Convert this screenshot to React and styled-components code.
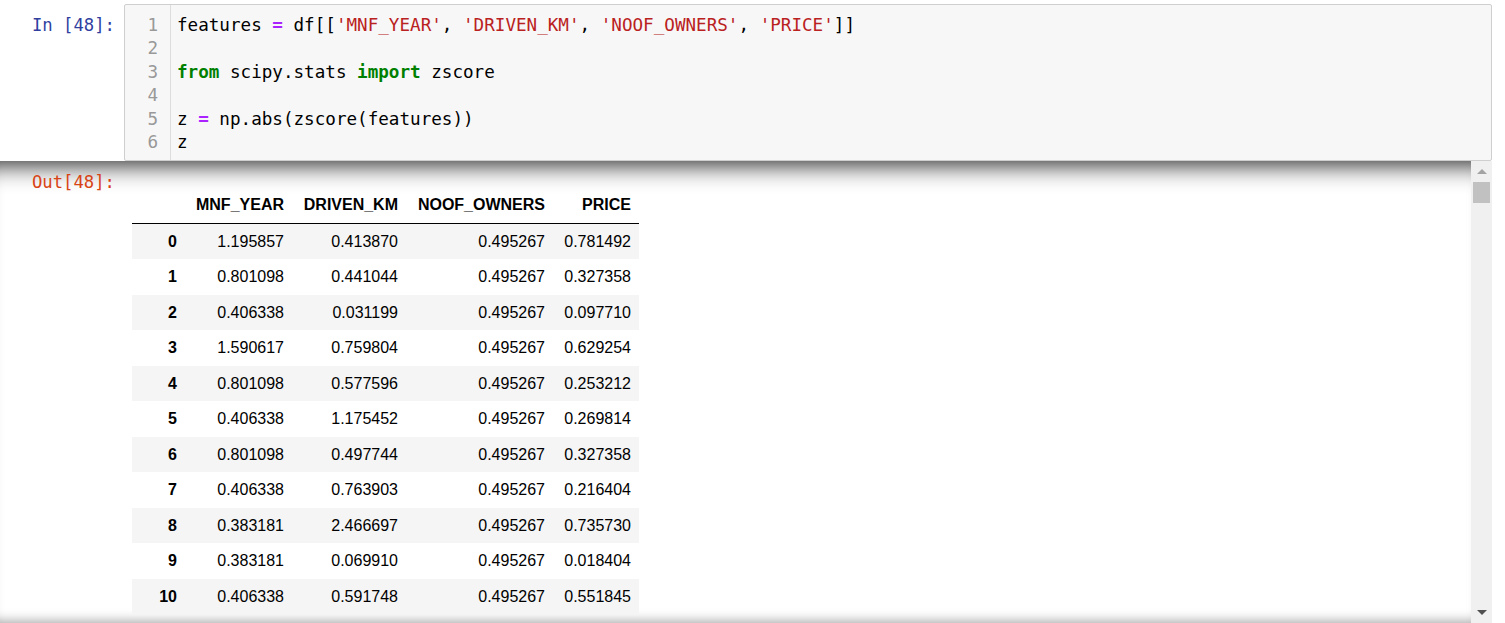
import styled, { createGlobalStyle } from 'styled-components';

const GlobalStyle = createGlobalStyle`
    body {
        margin: 0;
        background: #ffffff;
        overflow: hidden;
    }
`

const MONO = `"DejaVu Sans Mono", "Liberation Mono", monospace`

const Notebook = styled.div`
    padding: 4px 13px 0 0;
    width: 1505px;
    box-sizing: border-box;
`

const InputRow = styled.div`
    display: flex;
    align-items: flex-start;
`

const Prompt = styled.div`
    width: 124px;
    flex: none;
    box-sizing: border-box;
    padding-right: 9px;
    padding-top: ${p => p.$top}px;
    text-align: right;
    font-family: ${MONO};
    font-size: 17.25px;
    line-height: 23.4px;
    color: ${p => p.$color};
    white-space: pre;
`

const Editor = styled.div`
    flex: 1;
    display: flex;
    border: 1px solid #cfcfcf;
    border-radius: 2px;
    background: #f7f7f7;
    font-family: ${MONO};
    font-size: 17.6px;
    line-height: 23.4px;
`

const Gutter = styled.div`
    width: 46px;
    box-sizing: border-box;
    padding: 9px 12px 5.6px 0;
    border-right: 1px solid #dddddd;
    text-align: right;
    color: #999999;
`

const CodeLines = styled.div`
    flex: 1;
    padding: 9px 0 5.6px 6px;
    color: #000000;
`

const Line = styled.div`
    height: 23.4px;
    white-space: pre;
`

const Op = styled.span`
    color: #aa22ff;
    font-weight: bold;
`

const Str = styled.span`
    color: #ba2121;
`

const Kw = styled.span`
    color: #008000;
    font-weight: bold;
`

const OutputRow = styled.div`
    display: flex;
    height: 462px;
`

const OutputScroll = styled.div`
    flex: 1;
    display: flex;
    align-items: flex-start;
    overflow: hidden;
    box-shadow: inset 0 28px 24px -24px rgba(0, 0, 0, 0.85),
                inset 0 -14px 12px -12px rgba(0, 0, 0, 0.35);
`

const TableWrap = styled.div`
    margin: 28px 0 0 8px;
`

const Table = styled.table`
    border-collapse: collapse;
    border-spacing: 0;
    table-layout: fixed;
    width: 507px;
    font-family: "Liberation Sans", Arial, sans-serif;
    font-size: 16px;
    color: #000000;
`

const Col = styled.col`
    width: ${p => p.$w}px;
`

const HeadCell = styled.th`
    padding: 7px 8px 9px;
    line-height: 18px;
    text-align: right;
    font-weight: bold;
    border-bottom: 1px solid #000000;
    white-space: nowrap;
`

const Row = styled.tr`
    background: ${p => (p.$striped ? '#f5f5f5' : '#ffffff')};
`

const IndexCell = styled.th`
    padding: 8px;
    line-height: 19.5px;
    text-align: right;
    font-weight: bold;
`

const Cell = styled.td`
    padding: 8px;
    line-height: 19.5px;
    text-align: right;
    white-space: nowrap;
`

const Scrollbar = styled.div`
    width: 21px;
    flex: none;
    display: flex;
    flex-direction: column;
    background: #f0f0f0;
`

const ScrollButton = styled.div`
    height: 21px;
    display: flex;
    align-items: center;
    justify-content: center;
`

const Arrow = styled.div`
    width: 0;
    height: 0;
    border-left: 5px solid transparent;
    border-right: 5px solid transparent;
    ${p => p.$up
        ? 'border-bottom: 5px solid #a3a3a3;'
        : 'border-top: 5px solid #505050;'}
`

const Thumb = styled.div`
    height: 21px;
    margin: 0 2px;
    background: #c1c1c1;
`

const Track = styled.div`
    flex: 1;
`

const columns = ['MNF_YEAR', 'DRIVEN_KM', 'NOOF_OWNERS', 'PRICE']
const widths = [53, 107, 114, 147, 86]

const rows = [
    ['1.195857', '0.413870', '0.495267', '0.781492'],
    ['0.801098', '0.441044', '0.495267', '0.327358'],
    ['0.406338', '0.031199', '0.495267', '0.097710'],
    ['1.590617', '0.759804', '0.495267', '0.629254'],
    ['0.801098', '0.577596', '0.495267', '0.253212'],
    ['0.406338', '1.175452', '0.495267', '0.269814'],
    ['0.801098', '0.497744', '0.495267', '0.327358'],
    ['0.406338', '0.763903', '0.495267', '0.216404'],
    ['0.383181', '2.466697', '0.495267', '0.735730'],
    ['0.383181', '0.069910', '0.495267', '0.018404'],
    ['0.406338', '0.591748', '0.495267', '0.551845'],
]

const App = () => {
    return (
        <>
            <GlobalStyle />
            <Notebook>
                <InputRow>
                    <Prompt $top={10} $color="#303f9f">In [48]:</Prompt>
                    <Editor>
                        <Gutter>
                            {[1, 2, 3, 4, 5, 6].map(n => <Line key={n}>{n}</Line>)}
                        </Gutter>
                        <CodeLines>
                            <Line>
                                features <Op>=</Op> df[[<Str>'MNF_YEAR'</Str>, <Str>'DRIVEN_KM'</Str>, <Str>'NOOF_OWNERS'</Str>, <Str>'PRICE'</Str>]]
                            </Line>
                            <Line> </Line>
                            <Line><Kw>from</Kw> scipy.stats <Kw>import</Kw> zscore</Line>
                            <Line> </Line>
                            <Line>z <Op>=</Op> np.abs(zscore(features))</Line>
                            <Line>z</Line>
                        </CodeLines>
                    </Editor>
                </InputRow>

                <OutputRow>
                    <OutputScroll>
                        <Prompt $top={10} $color="#d84315">Out[48]:</Prompt>
                        <TableWrap>
                            <Table>
                                <colgroup>
                                    {widths.map((w, i) => <Col key={i} $w={w} />)}
                                </colgroup>
                                <thead>
                                    <tr>
                                        <HeadCell></HeadCell>
                                        {columns.map(c => <HeadCell key={c}>{c}</HeadCell>)}
                                    </tr>
                                </thead>
                                <tbody>
                                    {rows.map((r, i) => (
                                        <Row key={i} $striped={i % 2 === 0}>
                                            <IndexCell>{i}</IndexCell>
                                            {r.map((v, j) => <Cell key={j}>{v}</Cell>)}
                                        </Row>
                                    ))}
                                </tbody>
                            </Table>
                        </TableWrap>
                    </OutputScroll>
                    <Scrollbar>
                        <ScrollButton><Arrow $up /></ScrollButton>
                        <Thumb />
                        <Track />
                        <ScrollButton><Arrow /></ScrollButton>
                    </Scrollbar>
                </OutputRow>
            </Notebook>
        </>
    );
}

export default App
